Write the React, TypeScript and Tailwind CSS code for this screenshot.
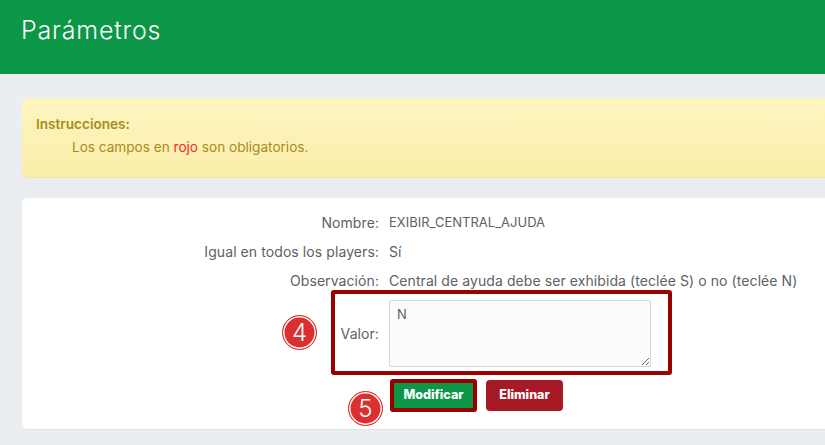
const FONT = "font-['Inter','Liberation_Sans',sans-serif]";

const ROWS = [
  { label: "Nombre:", value: "EXIBIR_CENTRAL_AJUDA", valueClass: "text-[13px] tracking-normal" },
  { label: "Igual en todos los players:", value: "Sí", valueClass: "" },
  { label: "Observación:", value: "Central de ayuda debe ser exhibida (teclée S) o no (teclée N)", valueClass: "" },
];

function Badge({ n, className }: { n: number; className: string }) {
  return (
    <div
      className={`absolute flex h-[35px] w-[35px] items-center justify-center rounded-full border border-[#dc3030] bg-[#dc3030] text-[24px] font-light leading-none text-white shadow-[inset_0_0_0_1.5px_white] ${className}`}
    >
      {n}
    </div>
  );
}

export default function App() {
  return (
    <div className={`h-[445px] w-[825px] overflow-hidden bg-[#ebeef1] ${FONT}`}>
      {/* Header */}
      <div className="h-[74px] bg-[#0c9647] pl-[21px] pt-[14px] text-[25px] font-light leading-[32px] tracking-[0.8px] text-white">
        Parámetros
      </div>

      <div className="w-[900px] pl-[22px] pt-[24px]">
        {/* Instructions */}
        <div className="h-[80px] rounded-[5px] border-b border-[#f3e3a4] bg-gradient-to-b from-[#fdf5c0] to-[#fceeaa] pl-[14px] pt-[15px] text-[13.6px] leading-[22px] text-[#a68c1c]">
          <div className="font-semibold">Instrucciones:</div>
          <div className="pl-[36px] pt-[1px]">
            Los campos en <span className="text-[#f52a2a]">rojo</span> son obligatorios.
          </div>
        </div>

        {/* Form card */}
        <div className="relative mt-[20px] h-[232px] rounded-[5px] border-b border-[#dfe3e6] bg-white pt-[10px] text-[14px] tracking-[0.08px] text-[#5c6166]">
          {ROWS.map((row) => (
            <div key={row.label} className="flex h-[29px] items-center gap-[10px]">
              <div className="w-[357px] text-right">{row.label}</div>
              <div className={row.valueClass}>{row.value}</div>
            </div>
          ))}

          <div className="mt-[5px] flex gap-[10px]">
            <div className="flex h-[67px] w-[357px] items-center justify-end">Valor:</div>
            <textarea
              readOnly
              value="N"
              className="h-[67px] w-[262px] rounded-[2px] border border-[#d5d9dc] bg-[#fbfbfb] px-[7px] py-[4px] text-[13px] text-[#5c6166] outline-none"
            />
          </div>

          <div className="mt-[12px] flex items-center gap-[9px] pl-[368px]">
            <button className="h-[33px] w-[87px] rounded-[3px] border-[4px] border-[#990000] bg-[#0c9647] text-[12.5px] font-extrabold tracking-normal text-white">
              Modificar
            </button>
            <button className="h-[31px] w-[77px] rounded-[4px] bg-[#a81926] text-[12.5px] font-extrabold tracking-normal text-white">
              Eliminar
            </button>
          </div>

          {/* Annotations */}
          <div className="pointer-events-none absolute left-[309px] top-[92px] h-[85px] w-[341px] rounded-[3px] border-[4px] border-[#990000]" />
          <Badge n={4} className="left-[260px] top-[117px]" />
          <Badge n={5} className="left-[326px] top-[193px]" />
        </div>
      </div>
    </div>
  );
}
